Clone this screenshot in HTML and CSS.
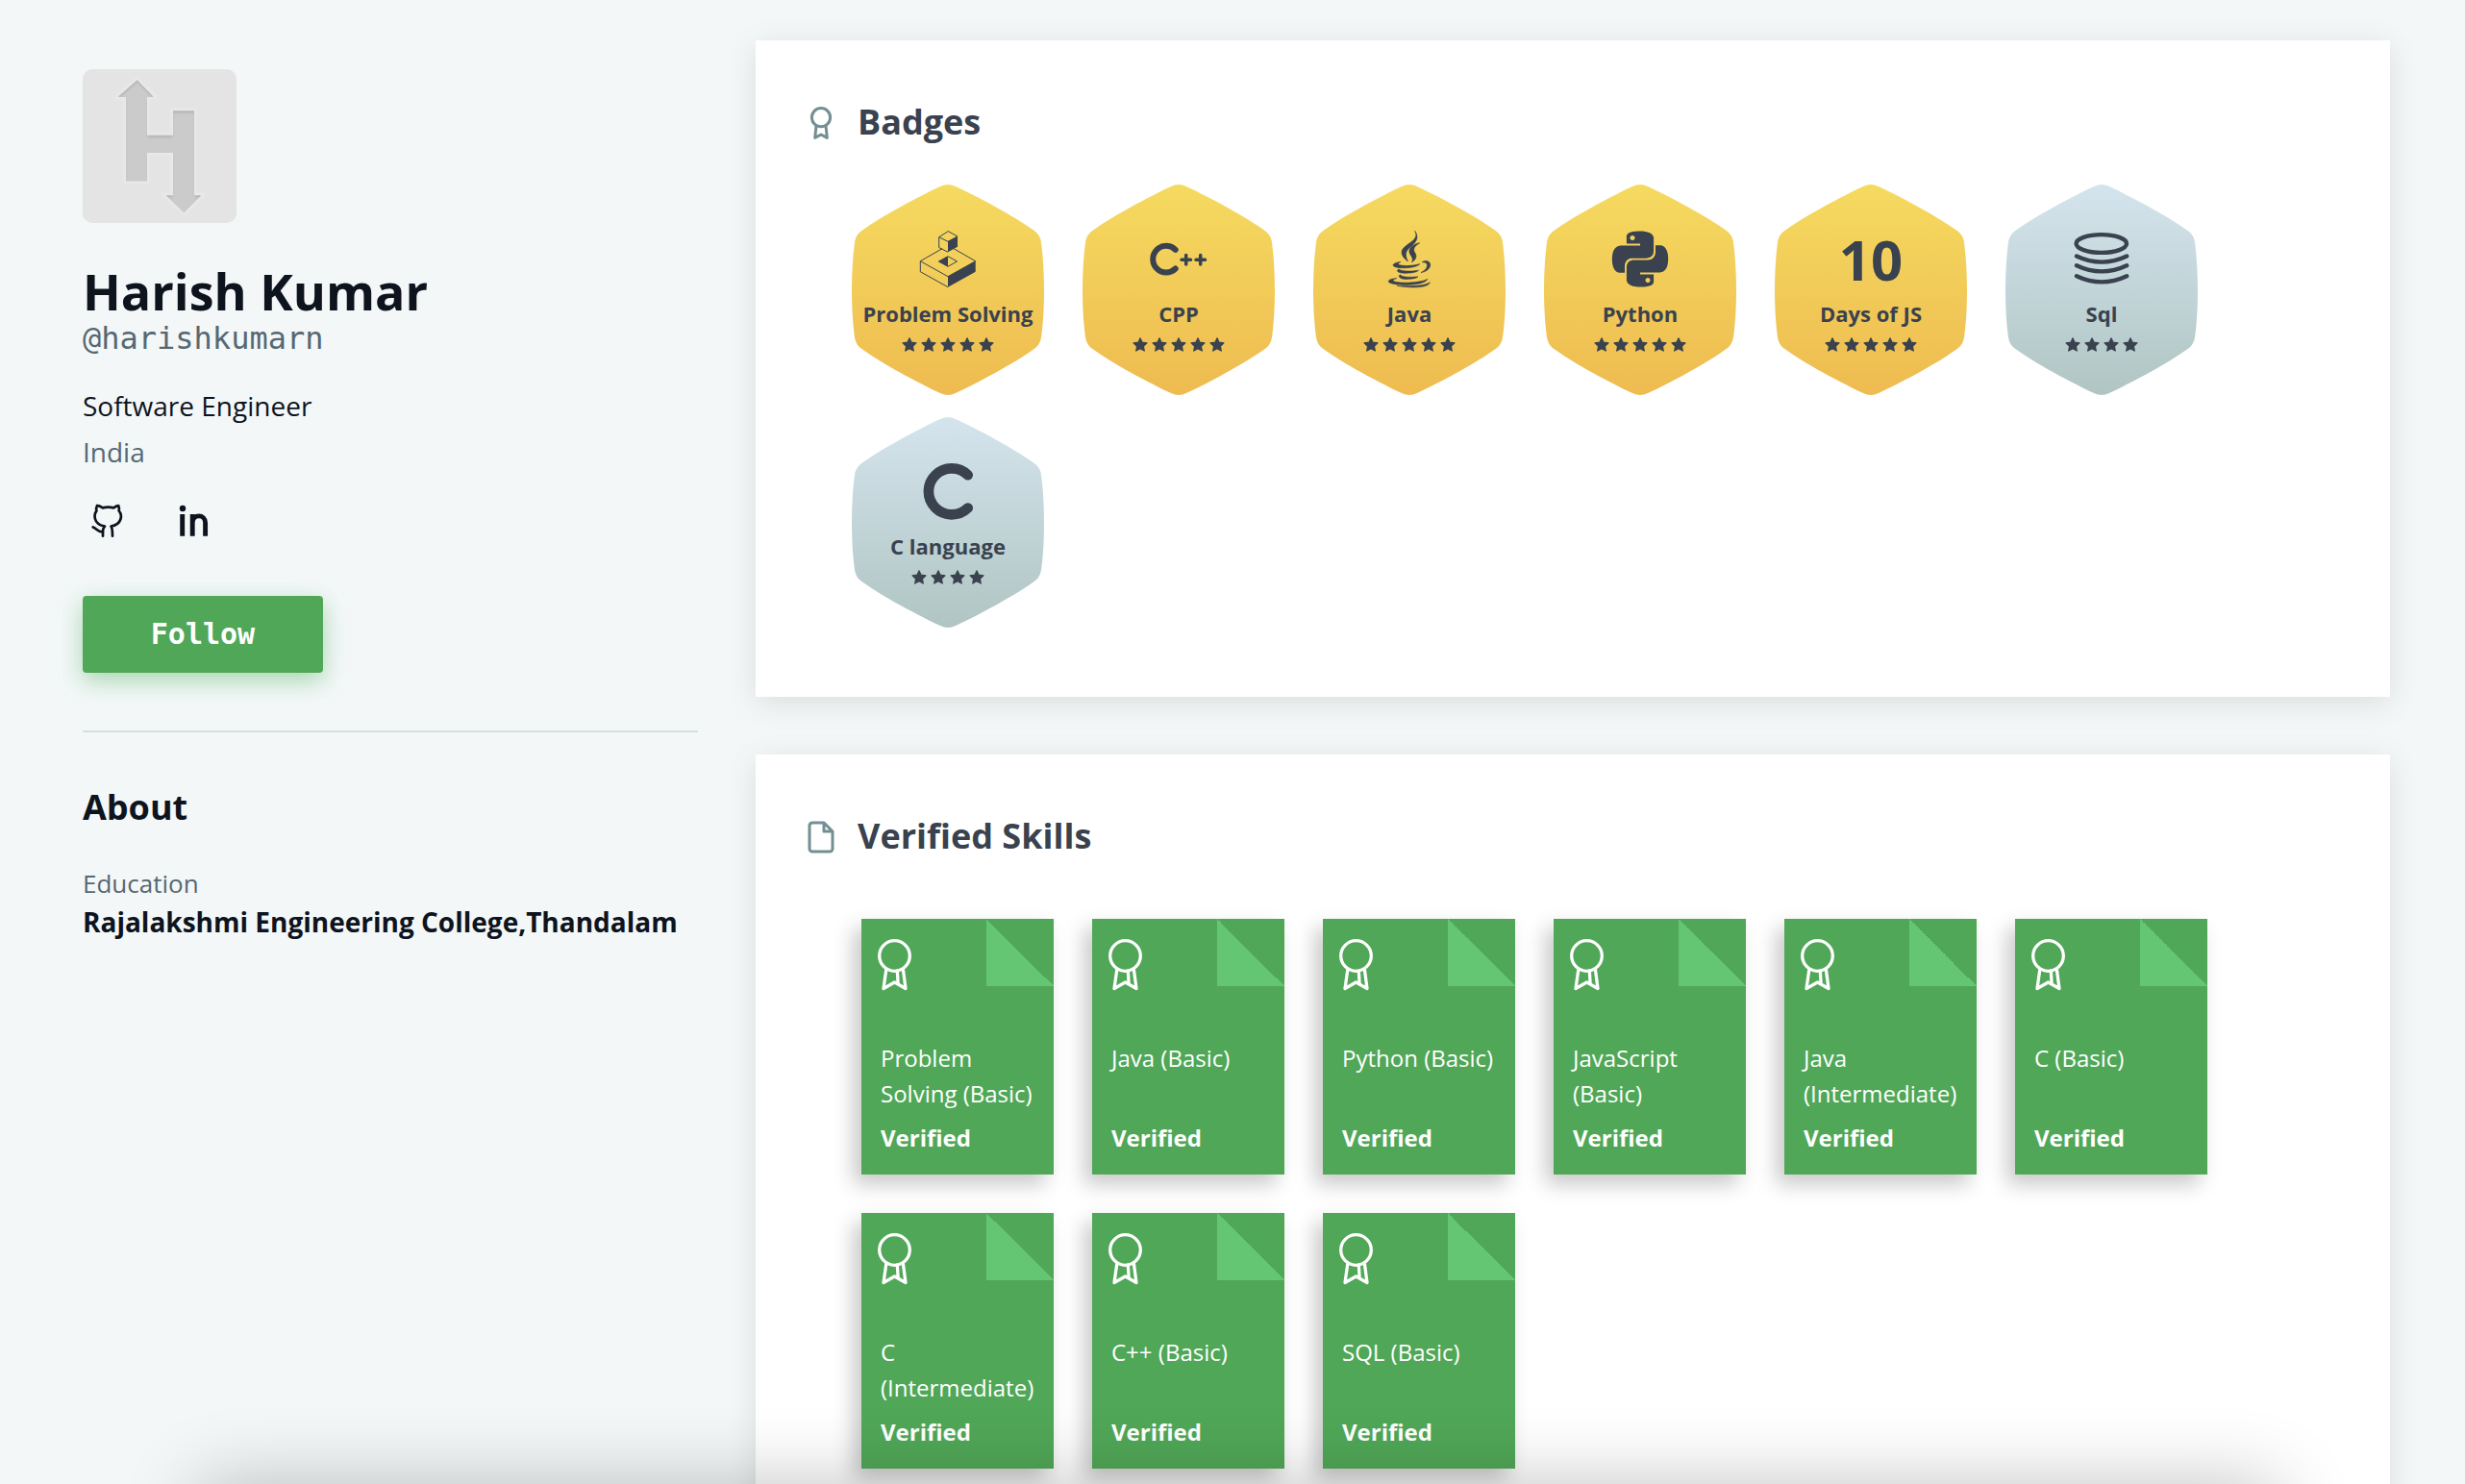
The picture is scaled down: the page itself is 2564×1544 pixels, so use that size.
FILE: index.html
```html
<!DOCTYPE html>
<html lang="en">
<head>
<meta charset="utf-8">
<meta name="viewport" content="width=device-width, initial-scale=1">
<title>Harish Kumar</title>
<link rel="stylesheet" href="styles.css">
</head>
<body>
<svg class="sprite" aria-hidden="true">
  <symbol id="star" viewBox="0 0 16 16"><path d="M8 .8l2.1 4.4 4.9.6-3.6 3.4.9 4.9L8 11.7l-4.300 2.400.9-4.900L1 5.800l4.900-.6z" fill="currentColor" stroke="currentColor" stroke-width="1.200" stroke-linejoin="round"/></symbol>
  <symbol id="ribbon" viewBox="0 0 36 54"><g fill="none" stroke="currentColor" stroke-width="3.300" stroke-linecap="round" stroke-linejoin="round"><circle cx="17.500" cy="17.500" r="15.800"/><path d="M8.700 32.500L6 51.500l11.500-6.500 11.500 6.500-2.500-19M20.300 33l.8 13"/></g></symbol>
</svg>
<div class="page">
  <aside class="sidebar">
    <svg class="avatar" viewBox="0 0 160 160" role="img" aria-label="Profile picture">
      <defs>
        <clipPath id="logo-clip"><path d="M56.700 11.300L73.700 28.700H67V68.700H94V43.300H116V131.300H123.300L105.300 149L86.700 131.300H94V87H67V116.300H45.300V28.700H36.700Z"/></clipPath>
        <filter id="soft" x="-20%" y="-20%" width="140%" height="140%"><feGaussianBlur stdDeviation="1.500"/></filter>
      </defs>
      <rect width="160" height="160" fill="#e4e4e4"/>
      <path filter="url(#soft)" fill="none" stroke="#e9e9e9" stroke-width="5" d="M56.700 11.300L73.700 28.700H67V68.700H94V43.300H116V131.300H123.300L105.300 149L86.700 131.300H94V87H67V116.300H45.300V28.700H36.700Z"/>
      <g clip-path="url(#logo-clip)">
        <rect width="160" height="160" fill="#b2b2b2"/>
        <path filter="url(#soft)" transform="translate(0 3)" fill="#cbcbcb" stroke="#cbcbcb" stroke-width="2" d="M56.700 11.300L73.700 28.700H67V68.700H94V43.300H116V131.300H123.300L105.300 149L86.700 131.300H94V87H67V116.300H45.300V28.700H36.700Z"/>
      </g>
    </svg>
    <h1 class="name">Harish Kumar</h1>
    <p class="handle">@harishkumarn</p>
    <p class="job">Software Engineer</p>
    <p class="country">India</p>
    <nav class="social">
      <a href="#github" aria-label="GitHub"><svg viewBox="0 0 40 40" fill="none" stroke="currentColor" stroke-width="2.700" stroke-linecap="round" stroke-linejoin="round"><path d="M9 4.200C8 6 8 8 8.400 9.600C6.500 12 6.200 15 7 18C8.200 22.500 12 24.800 17 25.500C15 27.500 15 29 15 35.700M15 31.200C10 32 9 28 4.700 26.400M9 4.200C11 4.200 13 5.200 14.800 6.400Q20.500 5 26.200 6.400C28 5.200 29.500 4.200 31.300 4.200C32 6 32 8 31.700 9.600C34 12 34.300 15 33.500 18C32 22.500 28.500 24.800 23.500 25.500C25 27.500 25 29 25 35.700"/></svg></a>
      <a href="#linkedin" aria-label="LinkedIn"><svg viewBox="0 0 40 40"><circle cx="8" cy="7" r="3.200" fill="currentColor"/><path d="M7.700 13V35.700M18.200 13V35.700M18.200 22C18.200 12.500 31.600 12.500 31.600 22V35.700" fill="none" stroke="currentColor" stroke-width="4.900"/></svg></a>
    </nav>
    <button class="follow" type="button">Follow</button>
    <section class="about">
      <h2>About</h2>
      <p class="about-label">Education</p>
      <p class="about-value">Rajalakshmi Engineering College,Thandalam</p>
    </section>
  </aside>

  <main class="content">
    <section class="card">
      <h2 class="card-title">
        <svg viewBox="0 0 24 24" fill="none" stroke="currentColor" stroke-width="2" stroke-linecap="round" stroke-linejoin="round" aria-hidden="true"><circle cx="12" cy="8.100" r="6.400"/><path d="M8.600 14.500L7.800 22.200L12 20L16.200 22.200L15.400 14.500"/></svg>
        Badges
      </h2>
      <ul class="badges">
        <li class="badge gold">
          <svg class="badge-icon" viewBox="0 0 60 60" aria-hidden="true"><g fill="none" stroke="currentColor" stroke-width="1" stroke-linejoin="round"><path d="M30.300.6L40 6L30 11.300L20.700 6.700ZM20.700 6.700V17.500L30 22.300M24 18.700L1.300 31.700V42.700L30 58.700M1.300 31.700L30 47.700L58.700 31.700L36 18.700M20.300 32L30 26.700L39.500 32L30 37.300Z"/></g><path fill="currentColor" d="M30 11.300L40 6V16.700L30 22.300ZM30 47.700L58.700 31.700V42.700L30 58.700ZM20.300 32L30 26.700V37.300Z"/></svg>
          <span class="badge-name">Problem Solving</span>
          <span class="stars" role="img" aria-label="5 stars"><svg><use href="#star"/></svg><svg><use href="#star"/></svg><svg><use href="#star"/></svg><svg><use href="#star"/></svg><svg><use href="#star"/></svg></span>
        </li>
        <li class="badge gold">
          <svg class="badge-icon" viewBox="0 0 60 60" fill="none" stroke="currentColor" stroke-linecap="round" aria-hidden="true"><path stroke-width="6" d="M26.700 19.800A13.800 13.800 0 1 0 26.700 39.500"/><path stroke-width="3.500" d="M33 30.300H42.500M37.700 25.500V35.100M48 30.300H57.500M52.700 25.500V35.100"/></svg>
          <span class="badge-name">CPP</span>
          <span class="stars" role="img" aria-label="5 stars"><svg><use href="#star"/></svg><svg><use href="#star"/></svg><svg><use href="#star"/></svg><svg><use href="#star"/></svg><svg><use href="#star"/></svg></span>
        </li>
        <li class="badge gold">
          <svg class="badge-icon" viewBox="0 0 60 60" fill="currentColor" aria-hidden="true"><path d="M35.700.3C42 11 22 14 22 22.500C22 27 26 30 28.500 32C25 25 26 21 31 17C36 13 41 8 35.700.3ZM40.700 12.700C34 14 29 18 30 22.500C30.600 26 35 28 32.500 32.800C37.500 30 38 26 35.500 22.500C33.500 19.500 35 16 40.700 12.700ZM21 32.500C16 33 13 34.500 13 36C14 40 36 40 41 34.500C34 37 20 37 18.500 35C18 34 19.500 33 21 32.500ZM43 32.800C48 29.500 52.500 32.500 51.600 36.500C50.500 41 46 43 42 43.600C46 41.500 48.500 39 48.500 36C48.500 33.500 46 32.800 43 32.800ZM19 40C16 41.500 17 44 26 44.200C33 44.300 38 43 39.500 41.300C34 42.300 22 42.800 19 40ZM20.500 45.800C17.500 47.500 20 50.400 27 50.400C33 50.400 37.500 49.500 39 47.800C33 48.600 22 48.800 20.500 45.800ZM17 49.600C11 49.800 8 51.500 8.300 53C9.500 57.500 46 58.500 48.800 50.300C43 54.500 16 55.500 13 52C12.500 51 15 50 17 49.600ZM17 57.200C28 59.500 49 60.500 51.400 53.800C46 57.800 30 58 17 57.200Z" stroke="currentColor" stroke-width=".6"/></svg>
          <span class="badge-name">Java</span>
          <span class="stars" role="img" aria-label="5 stars"><svg><use href="#star"/></svg><svg><use href="#star"/></svg><svg><use href="#star"/></svg><svg><use href="#star"/></svg><svg><use href="#star"/></svg></span>
        </li>
        <li class="badge gold">
          <svg class="badge-icon" viewBox="-.4 -.2 24.800 24.800" fill="currentColor" aria-hidden="true"><path d="M14.25.18l.9.2.73.26.59.3.45.32.34.34.25.34.16.33.1.3.04.26.02.2-.01.13V8.5l-.05.63-.13.55-.21.46-.26.38-.3.31-.33.25-.35.19-.35.14-.33.1-.3.07-.26.04-.21.02H8.77l-.69.05-.59.14-.5.22-.41.27-.33.32-.27.35-.2.36-.15.37-.1.35-.07.32-.04.27-.02.21v3.06H3.17l-.21-.03-.28-.07-.32-.12-.35-.18-.36-.26-.36-.36-.35-.46-.32-.59-.28-.73-.21-.88-.14-1.05-.05-1.23.06-1.22.16-1.04.24-.87.32-.71.36-.57.4-.44.42-.33.42-.24.4-.16.36-.1.32-.05.24-.01h.16l.06.01h8.16v-.83H6.180l-.01-2.750-.02-.370.05-.340.110-.310.170-.280.250-.260.310-.230.380-.200.440-.180.510-.150.580-.120.640-.100.710-.060.770-.040.840-.020 1.270.050zm-6.3 1.98l-.23.33-.08.41.08.41.23.34.33.22.41.09.41-.09.33-.22.23-.34.08-.41-.08-.41-.23-.33-.33-.22-.41-.09-.41.09zm13.09 3.95l.28.06.32.12.35.18.36.27.36.35.35.47.32.59.28.73.21.88.14 1.04.05 1.23-.06 1.23-.16 1.04-.24.86-.32.71-.36.57-.4.45-.42.33-.42.24-.4.16-.36.09-.32.05-.24.02-.16-.01h-8.220v.82h5.840l.01 2.760.02.36-.05.34-.11.31-.17.29-.25.25-.31.24-.38.2-.44.17-.51.15-.58.13-.64.09-.71.07-.77.04-.84.01-1.27-.04-1.07-.14-.9-.2-.73-.25-.59-.3-.45-.33-.34-.34-.25-.34-.16-.33-.1-.3-.04-.25-.02-.2.01-.13v-5.340l.05-.64.13-.54.21-.46.26-.38.3-.32.33-.24.35-.2.35-.14.33-.1.3-.06.26-.04.21-.02.13-.01h5.840l.69-.05.59-.14.5-.21.41-.28.33-.32.27-.35.2-.36.15-.36.1-.35.07-.32.04-.28.02-.21V6.070h2.090l.14.01zm-6.470 14.250l-.23.33-.08.41.08.41.23.33.33.23.41.08.41-.08.33-.23.23-.33.08-.41-.08-.41-.23-.33-.33-.23-.41-.08-.41.08z"/></svg>
          <span class="badge-name">Python</span>
          <span class="stars" role="img" aria-label="5 stars"><svg><use href="#star"/></svg><svg><use href="#star"/></svg><svg><use href="#star"/></svg><svg><use href="#star"/></svg><svg><use href="#star"/></svg></span>
        </li>
        <li class="badge gold">
          <span class="badge-number">10</span>
          <span class="badge-name">Days of JS</span>
          <span class="stars" role="img" aria-label="5 stars"><svg><use href="#star"/></svg><svg><use href="#star"/></svg><svg><use href="#star"/></svg><svg><use href="#star"/></svg><svg><use href="#star"/></svg></span>
        </li>
        <li class="badge silver">
          <svg class="badge-icon" viewBox="0 0 60 60" fill="none" stroke="currentColor" stroke-width="4.300" stroke-linecap="round" aria-hidden="true"><ellipse cx="29.800" cy="13.500" rx="26.200" ry="9.400"/><path d="M4 26.500Q30 38.900 56.200 26.500M4 36.200Q30 48.600 56.200 36.200M4 47.200Q30 59.600 56.200 47.200"/></svg>
          <span class="badge-name">Sql</span>
          <span class="stars" role="img" aria-label="4 stars"><svg><use href="#star"/></svg><svg><use href="#star"/></svg><svg><use href="#star"/></svg><svg><use href="#star"/></svg></span>
        </li>
        <li class="badge silver">
          <svg class="badge-icon" viewBox="0 0 60 60" fill="none" stroke="currentColor" stroke-width="10.700" stroke-linecap="round" aria-hidden="true"><path d="M50.700 12.200A24 24 0 1 0 50.700 46.500"/></svg>
          <span class="badge-name">C language</span>
          <span class="stars" role="img" aria-label="4 stars"><svg><use href="#star"/></svg><svg><use href="#star"/></svg><svg><use href="#star"/></svg><svg><use href="#star"/></svg></span>
        </li>
      </ul>
    </section>

    <section class="card">
      <h2 class="card-title">
        <svg viewBox="0 0 24 24" fill="none" stroke="currentColor" stroke-width="2" stroke-linecap="round" stroke-linejoin="round" aria-hidden="true"><path d="M14 2H6a2 2 0 0 0-2 2v16a2 2 0 0 0 2 2h12a2 2 0 0 0 2-2V8zM14 2v6h6"/></svg>
        Verified Skills
      </h2>
      <ul class="skills">
        <li><a class="skill" href="#problem-solving-basic"><svg class="skill-icon"><use href="#ribbon"/></svg><span class="skill-name">Problem Solving (Basic)</span><strong>Verified</strong></a></li>
        <li><a class="skill" href="#java-basic"><svg class="skill-icon"><use href="#ribbon"/></svg><span class="skill-name">Java (Basic)</span><strong>Verified</strong></a></li>
        <li><a class="skill" href="#python-basic"><svg class="skill-icon"><use href="#ribbon"/></svg><span class="skill-name">Python (Basic)</span><strong>Verified</strong></a></li>
        <li><a class="skill" href="#javascript-basic"><svg class="skill-icon"><use href="#ribbon"/></svg><span class="skill-name">JavaScript (Basic)</span><strong>Verified</strong></a></li>
        <li><a class="skill" href="#java-intermediate"><svg class="skill-icon"><use href="#ribbon"/></svg><span class="skill-name">Java (Intermediate)</span><strong>Verified</strong></a></li>
        <li><a class="skill" href="#c-basic"><svg class="skill-icon"><use href="#ribbon"/></svg><span class="skill-name">C (Basic)</span><strong>Verified</strong></a></li>
        <li><a class="skill" href="#c-intermediate"><svg class="skill-icon"><use href="#ribbon"/></svg><span class="skill-name">C (Intermediate)</span><strong>Verified</strong></a></li>
        <li><a class="skill" href="#cpp-basic"><svg class="skill-icon"><use href="#ribbon"/></svg><span class="skill-name">C++ (Basic)</span><strong>Verified</strong></a></li>
        <li><a class="skill" href="#sql-basic"><svg class="skill-icon"><use href="#ribbon"/></svg><span class="skill-name">SQL (Basic)</span><strong>Verified</strong></a></li>
      </ul>
    </section>
  </main>
</div>
<div class="bottom-shade"></div>
</body>
</html>
```
FILE: styles.css
```css
* {
  box-sizing: border-box;
}

body {
  margin: 0;
  background: #f3f7f8;
  color: #0e141e;
  font-family: "Open Sans", sans-serif;
  font-size: 28px;
  line-height: 40px;
}

h1, h2, p, ul {
  margin: 0;
  padding: 0;
}

ul {
  list-style: none;
}

a {
  color: inherit;
  text-decoration: none;
}

svg {
  display: block;
  flex: none;
}

.sprite {
  display: none;
}

.page {
  display: flex;
  gap: 60px;
  align-items: flex-start;
  height: 100vh;
  padding: 42px 78px 0 86px;
  overflow: hidden;
}

/* Profile column */
.sidebar {
  flex: 0 0 640px;
  padding-top: 30px;
}

.avatar {
  width: 160px;
  height: 160px;
  border-radius: 10px;
}

.name {
  margin-top: 40px;
  font-size: 52px;
  font-weight: 700;
  line-height: 62px;
}

.handle {
  color: #576871;
  font-family: "DejaVu Sans Mono", monospace;
  font-size: 32px;
  line-height: 36px;
}

.job {
  margin-top: 32px;
}

.country {
  margin-top: 8px;
  color: #576871;
}

.social {
  display: flex;
  gap: 50px;
  margin-top: 32px;
  padding-left: 6px;
}

.social svg {
  width: 40px;
  height: 40px;
}

.follow {
  width: 250px;
  height: 80px;
  margin-top: 58px;
  border: 0;
  border-radius: 4px;
  background: #50a757;
  box-shadow: 0 8px 24px rgba(57, 166, 66, 0.4);
  color: #fff;
  font-family: "DejaVu Sans Mono", monospace;
  font-size: 30px;
  font-weight: 700;
  line-height: 40px;
}

.about {
  margin-top: 60px;
  padding-top: 53px;
  border-top: 2px solid #d5dfdf;
}

.about h2 {
  font-size: 36px;
  line-height: 50px;
}

.about-label {
  margin-top: 34px;
  color: #576871;
  font-size: 26px;
}

.about-value {
  font-weight: 700;
}

/* Cards */
.content {
  display: flex;
  flex: 1;
  flex-direction: column;
  gap: 60px;
}

.card {
  padding: 61px 50px 72px;
  background: #fff;
  box-shadow: 0 6px 30px rgba(0, 0, 0, 0.1);
}

.card-title {
  display: flex;
  gap: 20px;
  align-items: center;
  color: #39424e;
  font-size: 36px;
  line-height: 48px;
}

.card-title svg {
  width: 36px;
  height: 36px;
  margin-top: 2px;
  color: #738f93;
}

/* Badges */
.badges {
  display: flex;
  flex-wrap: wrap;
  gap: 23px 40px;
  padding: 41px 50px 0;
}

.badge {
  display: flex;
  flex-direction: column;
  align-items: center;
  width: 200px;
  height: 219px;
  padding-top: 48px;
  clip-path: path("M92 2Q100 -2 108 2C140 17 175 37 191 49Q196 53 197 60C201 90 201 130 197 159Q196 166 191 170C175 182 140 202 108 217Q100 221 92 217C60 202 25 182 9 170Q4 166 3 159C-1 130 -1 90 3 60Q4 53 9 49C25 37 60 17 92 2Z");
  color: #39424e;
}

.gold {
  background: linear-gradient(#f5da60, #eebb50);
}

.silver {
  background: linear-gradient(#d4e4ed, #b0c5c3);
}

.badge-icon {
  width: 60px;
  height: 60px;
}

.badge-number {
  font-size: 58px;
  font-weight: 700;
  line-height: 60px;
}

.badge-name {
  margin-top: 11px;
  font-size: 22px;
  font-weight: 700;
  line-height: 30px;
  white-space: nowrap;
}

.stars {
  display: flex;
  gap: 4px;
  margin-top: 10px;
}

.stars svg {
  width: 16px;
  height: 16px;
}

/* Verified skills */
.skills {
  display: flex;
  flex-wrap: wrap;
  gap: 40px;
  padding: 62px 60px 0;
}

.skill {
  display: flex;
  flex-direction: column;
  width: 200px;
  min-height: 266px;
  padding: 21px 16px 20px 17px;
  background: linear-gradient(45deg, #64c572 50%, transparent 50%) top right / 70px 70px no-repeat #50a757;
  box-shadow: -8px 10px 20px rgba(0, 0, 0, 0.22);
  color: #fff;
}

.skill-icon {
  width: 36px;
  height: 54px;
}

.skill-name {
  min-height: 74px;
  margin-top: auto;
  padding-left: 3px;
  font-size: 24px;
  line-height: 37px;
}

.skill strong {
  margin-top: 10px;
  padding-left: 3px;
  font-size: 24px;
  line-height: 36px;
}

/* Shade cast over the lower edge of the window */
.bottom-shade {
  position: fixed;
  top: 100%;
  right: 196px;
  left: 206px;
  height: 200px;
  box-shadow: 0 0 80px rgba(0, 0, 0, 0.24);
  pointer-events: none;
}
```
